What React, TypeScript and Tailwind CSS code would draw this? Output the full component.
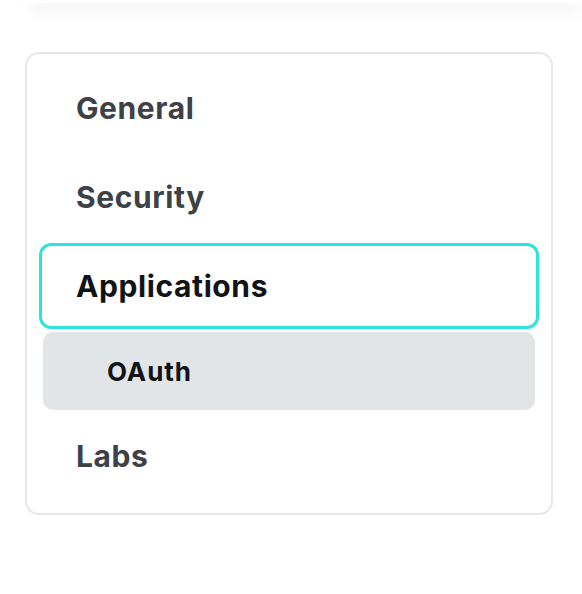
const ITEMS = [
  { label: "General", active: false },
  { label: "Security", active: false },
  { label: "Applications", active: true },
];

export default function App() {
  return (
    <div className="min-h-[594px] w-[582px] bg-white font-['Inter','Helvetica_Neue',Arial,sans-serif]">
      <div className="ml-[30px] h-[3px] rounded-bl-[14px] bg-white shadow-[0_5px_16px_rgba(0,0,0,0.2)]" />

      <nav className="mx-[25px] mt-[49px] w-[528px] rounded-[14px] border-2 border-[#e4e7eb] px-[12px] pt-[11px] pb-[14px]">
        <ul className="flex flex-col gap-[3px]">
          {ITEMS.map((item) => (
            <li key={item.label}>
              <a
                href="#"
                className={`flex h-[86px] items-center rounded-[12px] border-[3px] pl-[34px] text-[30px] font-bold tracking-[0.6px] ${
                  item.active
                    ? "border-[#2ee3d9] text-[#111315]"
                    : "border-transparent text-[#3d4148]"
                }`}
              >
                {item.label}
              </a>
            </li>
          ))}
          <li className="px-[4px]">
            <a
              href="#"
              className="flex h-[78px] items-center rounded-[10px] bg-[#e2e5e8] pl-[64px] text-[26px] font-bold tracking-[0.9px] text-[#111315]"
            >
              OAuth
            </a>
          </li>
          <li>
            <a
              href="#"
              className="flex h-[86px] items-center rounded-[12px] border-[3px] border-transparent pl-[34px] text-[30px] font-bold tracking-[0.6px] text-[#3d4148]"
            >
              Labs
            </a>
          </li>
        </ul>
      </nav>
    </div>
  );
}
